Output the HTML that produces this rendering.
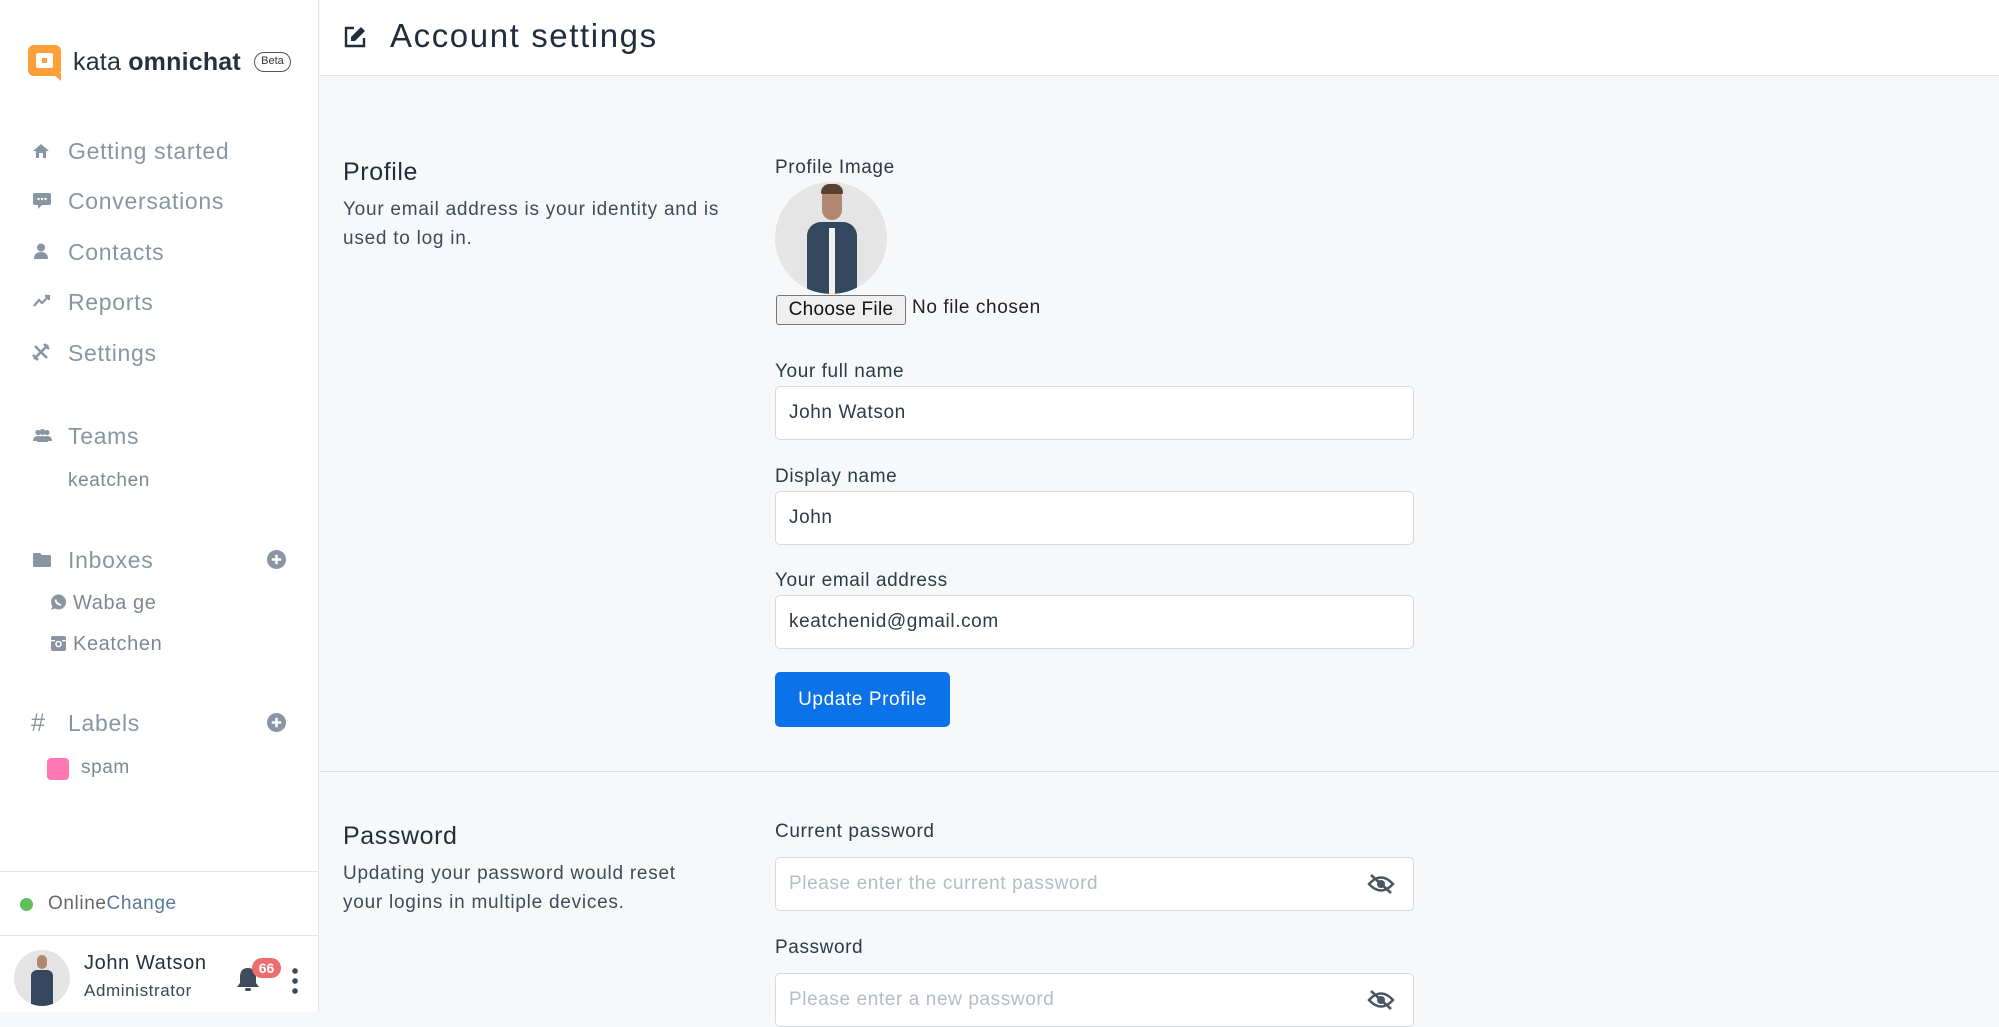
<!DOCTYPE html>
<html><head><meta charset="utf-8"><style>
*{box-sizing:border-box;margin:0;padding:0}
body{width:1999px;height:1012px;overflow:hidden;font-family:"Liberation Sans",sans-serif;background:#f7f8fa;position:relative;color:#1f2d3d;letter-spacing:0.6px}
.a{position:absolute;white-space:nowrap}
#side{position:absolute;left:0;top:0;width:319px;height:1012px;background:#fff;border-right:1px solid #e2e6ea}
.nav{font-size:23px;color:#8a95a3;line-height:1;letter-spacing:0.7px}
.sub{font-size:19px;color:#7d8896}
.ic{fill:#8a95a3}
#hdr{position:absolute;left:320px;top:0;right:0;height:76px;background:#fff;border-bottom:1px solid #dde1e6}
.lbl{font-size:19px;color:#2d3a4a}
.inp{position:absolute;left:775px;width:639px;height:54px;background:#fff;border:1px solid #d5dae0;border-radius:5px;font-size:19px;color:#2d3a4a;padding:0 0 0 13px;line-height:52px}
.ph{color:#b4bcc6}
.desc{font-size:19px;color:#3e4b5b;line-height:29px;letter-spacing:0.75px}
</style></head><body>
<div id="side">
 <svg class="a" style="left:28px;top:45px" width="34" height="36" viewBox="0 0 34 36"><rect x="0" y="0" width="33" height="31" rx="6" fill="#ff9f3a"/><path d="M26 30 L33 36 L33 28Z" fill="#ff9f3a"/><rect x="8" y="8" width="17" height="15" rx="2" fill="#fff"/><rect x="14" y="13" width="5" height="5" fill="#ff9f3a"/></svg>
 <div class="a" style="left:73px;top:48px;font-size:25px;color:#24323f;letter-spacing:0.2px">kata <b>omnichat</b></div>
 <div class="a" style="left:254px;top:52px;width:37px;height:20px;border:1.5px solid #555;border-radius:10px;font-size:11px;text-align:center;line-height:17px;color:#333;letter-spacing:0">Beta</div>

 <svg class="a" style="left:33px;top:143px" width="16" height="16" viewBox="0 0 16 16"><path class="ic" d="M8 1 L16 8 H13 V15 H10 V10 H6 V15 H3 V8 H0Z"/></svg>
 <div class="a nav" style="left:68px;top:140px">Getting started</div>
 <svg class="a" style="left:33px;top:192px" width="18" height="18" viewBox="0 0 18 18"><path class="ic" d="M2 1H16a2 2 0 0 1 2 2V11a2 2 0 0 1-2 2H9L5 17V13H2a2 2 0 0 1-2-2V3a2 2 0 0 1 2-2Z"/><circle cx="5.5" cy="7" r="1.2" fill="#fff"/><circle cx="9" cy="7" r="1.2" fill="#fff"/><circle cx="12.5" cy="7" r="1.2" fill="#fff"/></svg>
 <div class="a nav" style="left:68px;top:190px">Conversations</div>
 <svg class="a" style="left:33px;top:243px" width="16" height="16" viewBox="0 0 16 16"><circle class="ic" cx="8" cy="4.5" r="4"/><path class="ic" d="M1 16 Q1 9 8 9 Q15 9 15 16Z"/></svg>
 <div class="a nav" style="left:68px;top:241px">Contacts</div>
 <svg class="a" style="left:33px;top:294px" width="18" height="14" viewBox="0 0 18 14"><path d="M1 12 L6 6 L9 9 L16 2 M12 2H16V6" stroke="#8a95a3" stroke-width="2.2" fill="none"/></svg>
 <div class="a nav" style="left:68px;top:291px">Reports</div>
 <svg class="a" style="left:32px;top:343px" width="18" height="18" viewBox="0 0 18 18"><path d="M2 16 L16 2 M3 3 L15 15 M12 1 L17 6 M1 12 L6 17" stroke="#8a95a3" stroke-width="2.6" fill="none"/></svg>
 <div class="a nav" style="left:68px;top:342px">Settings</div>

 <svg class="a" style="left:33px;top:429px" width="19" height="13" viewBox="0 0 19 13"><circle class="ic" cx="5" cy="3.5" r="2.6"/><circle class="ic" cx="14" cy="3.5" r="2.6"/><circle class="ic" cx="9.5" cy="3" r="3"/><path class="ic" d="M0 12 Q0 7 5 7 Q10 7 10 12Z M9 12 Q9 7 14 7 Q19 7 19 12Z M4 13 Q4 7 9.5 7 Q15 7 15 13Z"/></svg>
 <div class="a nav" style="left:68px;top:425px">Teams</div>
 <div class="a sub" style="left:68px;top:470px">keatchen</div>

 <svg class="a" style="left:33px;top:553px" width="18" height="14" viewBox="0 0 18 14"><path class="ic" d="M0 1a1 1 0 0 1 1-1H7L9 2H17a1 1 0 0 1 1 1V13a1 1 0 0 1-1 1H1a1 1 0 0 1-1-1Z"/></svg>
 <div class="a nav" style="left:68px;top:549px">Inboxes</div>
 <svg class="a" style="left:267px;top:550px" width="19" height="19" viewBox="0 0 20 20"><circle class="ic" cx="10" cy="10" r="10"/><path d="M10 5V15M5 10H15" stroke="#fff" stroke-width="2.6"/></svg>
 <svg class="a" style="left:50px;top:594px" width="17" height="17" viewBox="0 0 17 17"><circle class="ic" cx="8.5" cy="8" r="7.5"/><path class="ic" d="M1 16 L3 11 L6 14Z"/><path d="M5.5 5.5 Q6 10 11 11" stroke="#fff" stroke-width="1.8" fill="none"/></svg>
 <div class="a sub" style="left:73px;top:592px;font-size:20px">Waba ge</div>
 <svg class="a" style="left:51px;top:636px" width="15" height="15" viewBox="0 0 15 15"><rect class="ic" width="15" height="15" rx="2"/><circle cx="7.5" cy="8" r="3.3" fill="#fff"/><circle class="ic" cx="7.5" cy="8" r="1.8"/><rect x="0" y="4" width="4" height="1.3" fill="#fff"/><rect x="11" y="4" width="4" height="1.3" fill="#fff"/></svg>
 <div class="a sub" style="left:73px;top:633px;font-size:20px">Keatchen</div>

 <div class="a nav" style="left:31px;top:711px;font-size:25px">#</div>
 <div class="a nav" style="left:68px;top:712px">Labels</div>
 <svg class="a" style="left:267px;top:713px" width="19" height="19" viewBox="0 0 20 20"><circle class="ic" cx="10" cy="10" r="10"/><path d="M10 5V15M5 10H15" stroke="#fff" stroke-width="2.6"/></svg>
 <div class="a" style="left:47px;top:758px;width:22px;height:22px;border-radius:4px;background:#ff78b5"></div>
 <div class="a sub" style="left:81px;top:757px">spam</div>

 <div class="a" style="left:0;top:871px;width:319px;border-top:1px solid #e2e6ea"></div>
 <div class="a" style="left:20px;top:898px;width:13px;height:13px;border-radius:50%;background:#5fbf5a"></div>
 <div class="a" style="left:48px;top:893px;font-size:19px;color:#666">Online<span style="color:#5a7799">Change</span></div>
 <div class="a" style="left:0;top:935px;width:319px;border-top:1px solid #e2e6ea"></div>
 <div class="a" style="left:14px;top:950px;width:56px;height:56px;border-radius:50%;background:#e4e4e4;overflow:hidden"><div style="position:absolute;left:17px;top:20px;width:22px;height:40px;background:#33475f;border-radius:6px 6px 0 0"></div><div style="position:absolute;left:23px;top:5px;width:10px;height:14px;background:#b08870;border-radius:5px"></div></div>
 <div class="a" style="left:84px;top:952px;font-size:20px;color:#24323f">John Watson</div>
 <div class="a" style="left:84px;top:981px;font-size:17px;color:#3a4654">Administrator</div>
 <svg class="a" style="left:236px;top:966px" width="24" height="26" viewBox="0 0 24 26"><path d="M12 2 Q4 2 4 11 V17 L1 21 H23 L20 17 V11 Q20 2 12 2Z" fill="#3d4b5c"/><rect x="9" y="22" width="6" height="3" rx="1.5" fill="#3d4b5c"/></svg>
 <div class="a" style="left:252px;top:958px;width:29px;height:20px;border-radius:10px;background:#ec6d6d;color:#fff;font-size:14px;font-weight:bold;text-align:center;line-height:20px;letter-spacing:0">66</div>
 <div class="a" style="left:292px;top:968px;width:6px;height:26px;background:radial-gradient(circle at 3px 3px,#3d4b5c 2.6px,transparent 3px),radial-gradient(circle at 3px 13px,#3d4b5c 2.6px,transparent 3px),radial-gradient(circle at 3px 23px,#3d4b5c 2.6px,transparent 3px)"></div>
</div>

<div id="hdr"></div>
<svg class="a" style="left:343px;top:25px" width="24" height="24" viewBox="0 0 24 24"><path d="M11 3H3V21H21V13" stroke="#1f2d3d" stroke-width="2.4" fill="none"/><path d="M18 2 L22 6 L12 16 H8 V12Z" fill="#1f2d3d"/></svg>
<div class="a" style="left:390px;top:17px;font-size:33px;color:#1f2d3d;letter-spacing:1.6px">Account settings</div>

<div class="a" style="left:343px;top:158px;font-size:25px;color:#1f2d3d">Profile</div>
<div class="a desc" style="left:343px;top:195px">Your email address is your identity and is<br>used to log in.</div>

<div class="a lbl" style="left:775px;top:157px">Profile Image</div>
<div class="a" style="left:775px;top:182px;width:112px;height:112px;border-radius:50%;background:#e5e5e5;overflow:hidden"><div style="position:absolute;left:32px;top:40px;width:50px;height:75px;background:#33475f;border-radius:14px 14px 0 0"></div><div style="position:absolute;left:54px;top:46px;width:6px;height:66px;background:#f2f2f2"></div><div style="position:absolute;left:47px;top:4px;width:20px;height:34px;background:#b08870;border-radius:10px"></div><div style="position:absolute;left:46px;top:2px;width:22px;height:10px;background:#5a4030;border-radius:10px 10px 2px 2px"></div></div>
<div class="a" style="left:776px;top:295px;width:130px;height:30px;background:#efefef;border:1px solid #777;border-radius:3px;font-size:19px;color:#111;text-align:center;line-height:28px;letter-spacing:0.3px">Choose File</div>
<div class="a" style="left:912px;top:297px;font-size:19px;color:#222">No file chosen</div>

<div class="a lbl" style="left:775px;top:361px">Your full name</div>
<div class="inp" style="top:386px">John Watson</div>
<div class="a lbl" style="left:775px;top:466px">Display name</div>
<div class="inp" style="top:491px">John</div>
<div class="a lbl" style="left:775px;top:570px">Your email address</div>
<div class="inp" style="top:595px">keatchenid@gmail.com</div>
<div class="a" style="left:775px;top:672px;width:175px;height:55px;border-radius:5px;background:#0b72e7;color:#fff;font-size:19px;text-align:center;line-height:55px">Update Profile</div>

<div class="a" style="left:320px;top:771px;width:1679px;border-top:1px solid #dde1e6"></div>

<div class="a" style="left:343px;top:822px;font-size:25px;color:#1f2d3d">Password</div>
<div class="a desc" style="left:343px;top:859px">Updating your password would reset<br>your logins in multiple devices.</div>
<div class="a lbl" style="left:775px;top:821px">Current password</div>
<div class="inp ph" style="top:857px">Please enter the current password</div>
<div class="a lbl" style="left:775px;top:937px">Password</div>
<div class="inp ph" style="top:973px">Please enter a new password</div>
<svg class="a" style="left:1367px;top:873px" width="28" height="22" viewBox="0 0 28 22"><path d="M2 11 Q14 -2 26 11 Q14 24 2 11Z" stroke="#4a5563" stroke-width="2.4" fill="none"/><circle cx="14" cy="11" r="4" fill="#4a5563"/><path d="M4 2 L24 20" stroke="#4a5563" stroke-width="2.6"/></svg>
<svg class="a" style="left:1367px;top:989px" width="28" height="22" viewBox="0 0 28 22"><path d="M2 11 Q14 -2 26 11 Q14 24 2 11Z" stroke="#4a5563" stroke-width="2.4" fill="none"/><circle cx="14" cy="11" r="4" fill="#4a5563"/><path d="M4 2 L24 20" stroke="#4a5563" stroke-width="2.6"/></svg>
</body></html>
